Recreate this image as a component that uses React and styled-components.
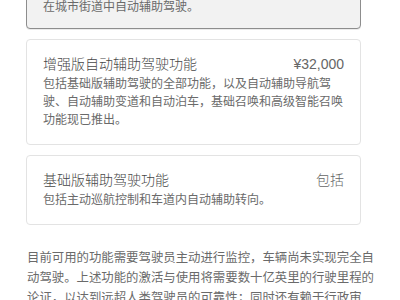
import styled, { createGlobalStyle } from 'styled-components';

const GlobalStyle = createGlobalStyle`
  body {
    margin: 0;
    background: #ffffff;
    font-family: 'Liberation Sans', 'Noto Sans CJK SC', sans-serif;
  }
`;

const Viewport = styled.div({
  width: 400,
  height: 300,
  overflow: 'hidden',
});

// page is shown scrolled down, the first card is partly above the fold
const Page = styled.div({
  marginTop: -74,
  paddingLeft: 26,
  paddingRight: 26,
  display: 'flex',
  flexDirection: 'column',
  gap: 10,
});

const Card = styled.div(({ selected }) => ({
  width: 335,
  boxSizing: 'border-box',
  padding: selected ? '15px 16px 12px' : '15px 16px',
  borderRadius: 4,
  border: selected ? '1px solid #8d8d8d' : '1px solid #e3e3e3',
  backgroundColor: selected ? '#f2f2f2' : '#ffffff',
  boxShadow: selected ? '0 1px 0 rgba(0,0,0,0.08)' : 'none',
}));

const CardHead = styled.div({
  display: 'flex',
  justifyContent: 'space-between',
  alignItems: 'center',
  height: 18,
  fontSize: 14,
  fontWeight: 300,
  lineHeight: '18px',
  color: '#474747',
});

const Price = styled.span({
  fontSize: 14,
  color: '#666666',
});

const CardText = styled.p({
  margin: '2px 0 0',
  fontSize: 12,
  lineHeight: '18px',
  color: '#6a6a6a',
});

const Disclaimer = styled.p({
  width: 348,
  margin: '13px 0 0 1px',
  fontSize: 12.4,
  lineHeight: '20px',
  color: '#6a6a6a',
});

const packages = [
  {
    name: '完全自动驾驶能力',
    price: '¥64,000',
    text: ['包括增强版自动辅助驾驶的全部功能。', '即将推出：识别交通信号灯和停车标志并做出反应。', '在城市街道中自动辅助驾驶。'],
    selected: true,
  },
  {
    name: '增强版自动辅助驾驶功能',
    price: '¥32,000',
    text: ['包括基础版辅助驾驶的全部功能，以及自动辅助导航驾驶、自动辅助变道和自动泊车，基础召唤和高级智能召唤功能现已推出。'],
  },
  {
    name: '基础版辅助驾驶功能',
    price: '包括',
    text: ['包括主动巡航控制和车道内自动辅助转向。'],
  },
];

export default function App() {
  return (
    <Viewport>
      <GlobalStyle />
      <Page>
        {packages.map(item => (
          <Card key={item.name} selected={item.selected}>
            <CardHead>
              <span>{item.name}</span>
              <Price>{item.price}</Price>
            </CardHead>
            <CardText>
              {item.text.map((line, i) => (
                <span key={i}>
                  {i > 0 && <br />}
                  {line}
                </span>
              ))}
            </CardText>
          </Card>
        ))}
        <Disclaimer>
          目前可用的功能需要驾驶员主动进行监控，车辆尚未实现完全自动驾驶。上述功能的激活与使用将需要数十亿英里的行驶里程的论证，以达到远超人类驾驶员的可靠性；同时还有赖于行政审批。
        </Disclaimer>
      </Page>
    </Viewport>
  );
}
